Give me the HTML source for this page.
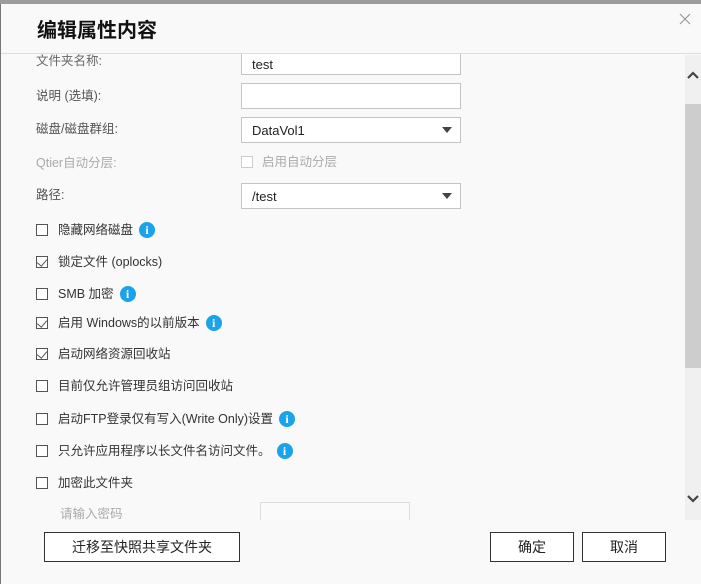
<!DOCTYPE html>
<html><head><meta charset="utf-8"><style>
*{margin:0;padding:0;box-sizing:border-box}
body{width:701px;height:584px;overflow:hidden;background:#f9f9f9;font-family:"Liberation Sans","Noto Sans CJK SC",sans-serif;font-size:13px;color:#333;position:relative}
.a{position:absolute}
.inp{position:absolute;left:241px;width:220px;background:#fff;border:1px solid #c4c4c4;padding-left:10px;font-size:13px;color:#222;display:flex;align-items:center}
.arr{position:absolute;right:8px;top:50%;margin-top:-3px;width:0;height:0;border-left:5px solid transparent;border-right:5px solid transparent;border-top:6px solid #444}
.lbl{position:absolute;left:36px;color:#555;font-size:12.5px;line-height:16px}
.cb{position:absolute;left:36px;width:12px;height:12px;border:1px solid #555;background:#fff}
.ck::after{content:"";position:absolute;left:2px;top:0px;width:5px;height:8px;border-right:1.3px solid #555;border-bottom:1.3px solid #555;transform:rotate(40deg)}
.t{position:absolute;left:58px;color:#333;font-size:12.5px;line-height:16px;height:16px;display:flex;align-items:center}
.i{display:inline-block;width:16px;height:16px;border-radius:50%;background:#1aa3ea;color:#fff;font-weight:bold;font-size:12px;text-align:center;line-height:16px;margin-left:6px;font-family:"Liberation Serif",serif}
.btn{position:absolute;top:532px;height:30px;border:1px solid #333;background:#fff;font-size:14px;color:#222;display:flex;align-items:center;justify-content:center}
</style></head><body>
<div class="a" style="left:0;top:0;width:701px;height:4px;background:#9c9c9c"></div>
<div class="a" style="left:0;top:4px;width:1px;height:580px;background:#777"></div>

<div class="inp" style="top:50px;height:25px">test</div>
<div class="a" style="left:1px;top:4px;width:700px;height:50px;background:#f9f9f9;border-bottom:1px solid #ddd"></div>
<div class="a" style="left:37px;top:14px;font-size:20px;font-weight:bold;color:#111">编辑属性内容</div>
<svg class="a" style="left:679px;top:13px" width="12" height="12"><path d="M1 1 L11 11 M11 1 L1 11" stroke="#999" stroke-width="1.2"/></svg>
<div class="inp" style="top:54px;height:21px;border-top:none">test</div>
<div class="lbl" style="top:53px;color:#666">文件夹名称:</div>

<div class="lbl" style="top:88px">说明 (选填):</div>
<div class="inp" style="top:83px;height:26px"></div>
<div class="lbl" style="top:121px">磁盘/磁盘群组:</div>
<div class="inp" style="top:117px;height:26px">DataVol1<span class="arr"></span></div>
<div class="lbl" style="top:155px;color:#aaa">Qtier自动分层:</div>
<div class="a" style="left:241px;top:156px;width:12px;height:12px;border:1px solid #ccc;background:#fff"></div>
<div class="a" style="left:262px;top:154px;color:#aaa;font-size:12.5px;line-height:16px">启用自动分层</div>
<div class="lbl" style="top:187px">路径:</div>
<div class="inp" style="top:183px;height:26px">/test<span class="arr"></span></div>

<div class="cb" style="top:224px"></div><div class="t" style="top:222px">隐藏网络磁盘<span class="i">i</span></div>
<div class="cb ck" style="top:256px"></div><div class="t" style="top:254px">锁定文件 (oplocks)</div>
<div class="cb" style="top:288px"></div><div class="t" style="top:286px">SMB 加密<span class="i">i</span></div>
<div class="cb ck" style="top:317px"></div><div class="t" style="top:315px">启用 Windows的以前版本<span class="i">i</span></div>
<div class="cb ck" style="top:348px"></div><div class="t" style="top:346px">启动网络资源回收站</div>
<div class="cb" style="top:380px"></div><div class="t" style="top:378px">目前仅允许管理员组访问回收站</div>
<div class="cb" style="top:413px"></div><div class="t" style="top:411px">启动FTP登录仅有写入(Write Only)设置<span class="i">i</span></div>
<div class="cb" style="top:445px"></div><div class="t" style="top:443px">只允许应用程序以长文件名访问文件。<span class="i">i</span></div>
<div class="cb" style="top:477px"></div><div class="t" style="top:475px">加密此文件夹</div>
<div class="a" style="left:60px;top:506px;color:#aaa;font-size:12.5px;line-height:16px">请输入密码</div>
<div class="a" style="left:260px;top:502px;width:150px;height:18px;border:1px solid #ddd;border-bottom:none;background:#fafafa"></div>

<div class="a" style="left:685px;top:55px;width:16px;height:465px;background:#f0f0f0"></div>
<div class="a" style="left:685px;top:104px;width:16px;height:264px;background:#cdcdcd"></div>
<svg class="a" style="left:686px;top:70px" width="14" height="10"><path d="M2 8 L7 3 L12 8" stroke="#444" stroke-width="2.2" fill="none"/></svg>
<svg class="a" style="left:686px;top:494px" width="14" height="10"><path d="M2 2 L7 7 L12 2" stroke="#444" stroke-width="2.2" fill="none"/></svg>

<div class="btn" style="left:44px;width:196px">迁移至快照共享文件夹</div>
<div class="btn" style="left:490px;width:84px">确定</div>
<div class="btn" style="left:582px;width:84px">取消</div>
</body></html>
